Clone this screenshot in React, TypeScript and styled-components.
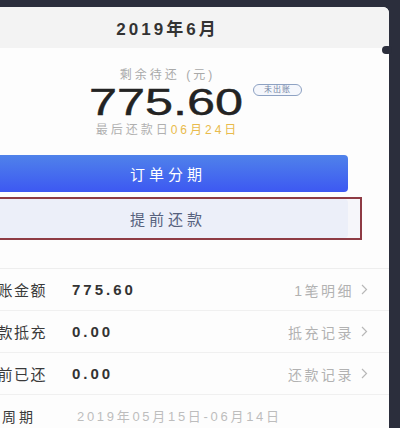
import React from "react";
import styled, { createGlobalStyle } from "styled-components";

const GlobalStyle = createGlobalStyle`
  html, body {
    margin: 0;
    padding: 0;
    background: #2b2e3c;
  }
  body {
    font-family: "Liberation Sans", "Noto Sans CJK SC", sans-serif;
  }
`;

const Screen = styled.div`
  width: 400px;
  height: 428px;
  overflow: hidden;
  padding-top: 7px;
  box-sizing: border-box;
  background: #2b2e3c;
`;

const Card = styled.div`
  position: relative;
  width: 446px;
  margin-left: -57px;
  background: #fdfdfd;
  border-radius: 6px 6px 0 0;
`;

const Notch = styled.div`
  position: absolute;
  right: -3px;
  top: 39px;
  width: 10px;
  height: 8px;
  border-radius: 4px;
  background: #2b2e3c;
`;

const Header = styled.div`
  height: 41px;
  display: flex;
  align-items: center;
  justify-content: center;
  background: #f3f3f3;
  border-radius: 6px 6px 0 0;
  font-size: 17px;
  font-weight: 600;
  letter-spacing: 3px;
  padding-left: 3px;
  color: #333;
`;

const Summary = styled.div`
  display: flex;
  flex-direction: column;
  align-items: center;
  padding: 20px 41px 28px;
  border-bottom: 1px solid #eeeeee;
`;

const Caption = styled.div`
  font-size: 12px;
  line-height: 14px;
  letter-spacing: 3px;
  padding-left: 3px;
  color: #a9a9a9;
`;

const AmountWrap = styled.div`
  position: relative;
  margin-top: 3px;
`;

const Amount = styled.div`
  font-size: 36px;
  line-height: 36px;
  color: #232323;
  transform: scaleX(1.4);
  -webkit-text-stroke: 0.4px #232323;
`;

const Badge = styled.span`
  position: absolute;
  left: 100%;
  top: -1px;
  margin-left: 32px;
  height: 10px;
  padding: 0 10px;
  border: 1px solid #8ea2c3;
  border-radius: 6px;
  background: #f5f7fc;
  font-size: 8px;
  line-height: 10px;
  letter-spacing: 1px;
  color: #7486a6;
  white-space: nowrap;
`;

const DueLine = styled.div`
  margin-top: 2px;
  font-size: 12px;
  line-height: 14px;
  letter-spacing: 3px;
  padding-left: 3px;
  color: #b0b0b0;
`;

const DueDate = styled.span`
  color: #e9bb4c;
`;

const Button = styled.div<{ $primary?: boolean }>`
  width: 100%;
  box-sizing: border-box;
  display: flex;
  align-items: center;
  justify-content: center;
  height: ${(p) => (p.$primary ? "37px" : "39px")};
  border-radius: 4px;
  font-size: 15px;
  letter-spacing: 4px;
  padding-left: 4px;
  color: ${(p) => (p.$primary ? "#ffffff" : "#56617d")};
  background: ${(p) =>
    p.$primary ? "linear-gradient(180deg, #4f82ea 0%, #3d58f2 100%)" : "#eceff9"};
`;

const PrimaryButton = styled(Button)`
  margin-top: 18px;
`;

const Highlight = styled.div`
  align-self: stretch;
  margin: 5px -14px 0;
  padding: 0 12px;
  border: 2px solid #8e3b44;
  background: #f6f6fa;
`;

const List = styled.div`
  display: flex;
  flex-direction: column;
`;

const Row = styled.div`
  height: 41px;
  display: flex;
  align-items: center;
  padding: 0 21px 0 38px;
  border-bottom: 1px solid #f0f0f0;
`;

const Label = styled.div<{ $small?: boolean }>`
  width: ${(p) => (p.$small ? "104px" : "91px")};
  margin-left: ${(p) => (p.$small ? "-13px" : "0")};
  flex-shrink: 0;
  font-size: ${(p) => (p.$small ? "14px" : "15px")};
  letter-spacing: ${(p) => (p.$small ? "3px" : "1.5px")};
  color: #3a3a3a;
`;

const Value = styled.div`
  flex: 1;
  font-size: 15px;
  font-weight: 700;
  letter-spacing: 3px;
  color: #333;
`;

const Period = styled.div`
  flex: 1;
  padding-left: 5px;
  font-size: 13px;
  letter-spacing: 2.7px;
  color: #bdbdbd;
`;

const Link = styled.div`
  display: flex;
  align-items: center;
  gap: 7px;
  font-size: 14px;
  letter-spacing: 2.5px;
  color: #b2b2b2;
`;

const Chevron = () => (
  <svg width="7" height="11" viewBox="0 0 7 11">
    <path d="M1 1l4.5 4.5L1 10" fill="none" stroke="#b8b8b8" strokeWidth="1.2" />
  </svg>
);

const rows = [
  { label: "出账金额", value: "775.60", link: "1笔明细" },
  { label: "退款抵充", value: "0.00", link: "抵充记录" },
  { label: "提前已还", value: "0.00", link: "还款记录" },
];

const App: React.FC = () => {
  return (
    <>
      <GlobalStyle />
      <Screen>
        <Card>
          <Notch />
          <Header>2019年6月</Header>
          <Summary>
            <Caption>剩余待还 (元)</Caption>
            <AmountWrap>
              <Amount>775.60</Amount>
              <Badge>未出账</Badge>
            </AmountWrap>
            <DueLine>
              最后还款日<DueDate>06月24日</DueDate>
            </DueLine>
            <PrimaryButton $primary>订单分期</PrimaryButton>
            <Highlight>
              <Button>提前还款</Button>
            </Highlight>
          </Summary>
          <List>
            {rows.map((row) => (
              <Row key={row.label}>
                <Label>{row.label}</Label>
                <Value>{row.value}</Value>
                <Link>
                  {row.link}
                  <Chevron />
                </Link>
              </Row>
            ))}
            <Row>
              <Label $small>账单周期</Label>
              <Period>2019年05月15日-06月14日</Period>
            </Row>
          </List>
        </Card>
      </Screen>
    </>
  );
};

export default App;
